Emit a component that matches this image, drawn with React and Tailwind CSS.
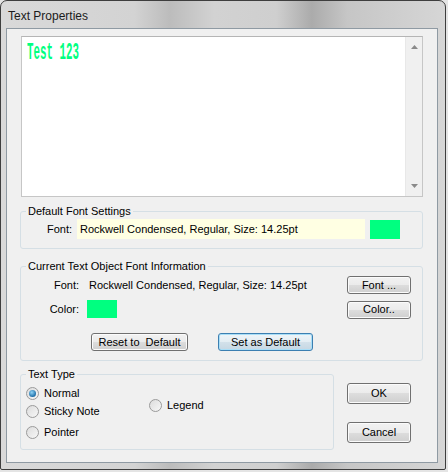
import React from "react";

const font = { fontFamily: '"Liberation Sans", Arial, sans-serif' };

function Btn({ children, className = "", isDefault = false }) {
  const base = isDefault
    ? "border-[#3c7fb1] bg-[linear-gradient(#eef4f8_0%,#e3edf3_50%,#d3e1ea_50%,#c6d7e3_100%)] shadow-[inset_0_0_0_1px_#a9def7]"
    : "border-[#707070] bg-[linear-gradient(#f2f2f2_0%,#ebebeb_50%,#dddddd_50%,#cfcfcf_100%)] shadow-[inset_0_0_0_1px_#fbfbfb]";
  return (
    <div className={`flex items-center justify-center rounded-[3px] border text-[11px] leading-none text-black ${base} ${className}`}>
      {children}
    </div>
  );
}

function Radio({ label, checked = false }) {
  return (
    <div className="flex h-[16px] items-center">
      <div className="flex h-[13px] w-[13px] items-center justify-center rounded-full border border-[#9a9a9a] bg-[linear-gradient(135deg,#dcdcdc,#f7f7f7)]">
        {checked ? (
          <div className="h-[7px] w-[7px] rounded-full bg-[radial-gradient(circle_at_40%_35%,#8fd3f6,#1e6fa8_70%,#17547f)]" />
        ) : null}
      </div>
      <span className="ml-[5px] text-[11px] text-black">{label}</span>
    </div>
  );
}

function Group({ title, className = "", children }) {
  return (
    <fieldset className={`rounded-[3px] border border-[#d5dfe5] p-0 ${className}`}>
      <legend className="ml-[5px] px-[2px] text-[11px] leading-[13px] text-black">{title}</legend>
      {children}
    </fieldset>
  );
}

export default function App() {
  return (
    <div className="h-[472px] w-[448px] bg-[#e4e4e4]" style={font}>
      <div className="flex h-[470px] w-[446px] flex-col rounded-t-[7px] rounded-b-[2px] border border-[#3e3e3e] bg-[linear-gradient(90deg,#d9d9d9_0%,#d3d3d3_30%,#bcbcbc_38%,#d2d2d2_48%,#cfcfcf_62%,#ababab_70%,#c6c6c6_78%,#d6d6d6_100%)]">
        {/* title bar */}
        <div className="flex h-[27px] items-center pl-[7px] pt-[2px] text-[12px] text-[#1b1b1b]">Text Properties</div>

        {/* client area */}
        <div className="ml-[5px] h-[435px] w-[432px] border border-[#8f9aa3] bg-[#f0f0f0]">
          {/* preview text box */}
          <div className="ml-[14px] mt-[7px] flex h-[161px] w-[402px] border border-[#c6c6c6] border-t-[#b5b5b5] bg-white">
            <div className="flex-1 overflow-hidden pl-[5px] pt-[3px]">
              <div className="origin-left scale-x-[0.47] whitespace-nowrap text-[23px] font-bold leading-[26px] text-[#00ff80]" style={{ fontFamily: '"Liberation Mono", "Courier New", monospace' }}>
                Test 123
              </div>
            </div>
            <div className="flex w-[17px] flex-col items-center justify-between border-l border-[#e8e8e8] bg-[#f0f0f0] py-[8px]">
              <svg width="7" height="4" viewBox="0 0 7 4"><path d="M0 4 L3.5 0 L7 4 Z" fill="#8a8a8a" /></svg>
              <svg width="7" height="4" viewBox="0 0 7 4"><path d="M0 0 L3.5 4 L7 0 Z" fill="#8a8a8a" /></svg>
            </div>
          </div>

          {/* default font settings */}
          <Group title="Default Font Settings" className="ml-[13px] mt-[8px] w-[403px]">
            <div className="mt-[1px] mb-[9px] flex h-[20px] items-center">
              <span className="w-[51px] text-right text-[11px] text-black">Font:</span>
              <div className="ml-[5px] flex h-[20px] w-[288px] items-center bg-[#ffffe3] pl-[3px] text-[11px] text-black">
                Rockwell Condensed, Regular, Size: 14.25pt
              </div>
              <div className="ml-[5px] h-[19px] w-[30px] bg-[#00ff80]" />
            </div>
          </Group>

          {/* current text object */}
          <Group title="Current Text Object Font Information" className="ml-[13px] mt-[11px] w-[403px]">
            <div className="mt-[3px] flex h-[18px] items-center">
              <span className="w-[58px] text-right text-[11px] text-black">Font:</span>
              <span className="ml-[10px] text-[11px] text-black">Rockwell Condensed, Regular, Size: 14.25pt</span>
              <Btn className="ml-auto mr-[11px] h-[18px] w-[64px]">Font ...</Btn>
            </div>
            <div className="mt-[6px] flex h-[19px] items-center">
              <span className="w-[58px] text-right text-[11px] text-black">Color:</span>
              <div className="ml-[8px] h-[18px] w-[30px] self-start bg-[#00ff80]" />
              <Btn className="ml-auto mr-[11px] h-[18px] w-[64px]">Color..</Btn>
            </div>
            <div className="mt-[14px] mb-[9px] flex">
              <Btn className="ml-[70px] h-[18px] w-[97px]">Reset to&nbsp; Default</Btn>
              <Btn isDefault className="ml-[30px] h-[18px] w-[95px]">Set as Default</Btn>
            </div>
          </Group>

          {/* text type + OK/Cancel */}
          <div className="mt-[7px] flex">
            <Group title="Text Type" className="ml-[13px] w-[314px]">
              <div className="flex pb-[9px]">
                <div className="ml-[5px] mt-[4px] flex w-[123px] flex-col">
                  <Radio label="Normal" checked />
                  <div className="mt-[2px]"><Radio label="Sticky Note" /></div>
                  <div className="mt-[5px]"><Radio label="Pointer" /></div>
                </div>
                <div className="mt-[16px]">
                  <Radio label="Legend" />
                </div>
              </div>
            </Group>
            <div className="ml-[13px] mt-[15px] flex flex-col">
              <Btn className="h-[21px] w-[64px]">OK</Btn>
              <Btn className="mt-[18px] h-[21px] w-[64px]">Cancel</Btn>
            </div>
          </div>
        </div>
      </div>
    </div>
  );
}
